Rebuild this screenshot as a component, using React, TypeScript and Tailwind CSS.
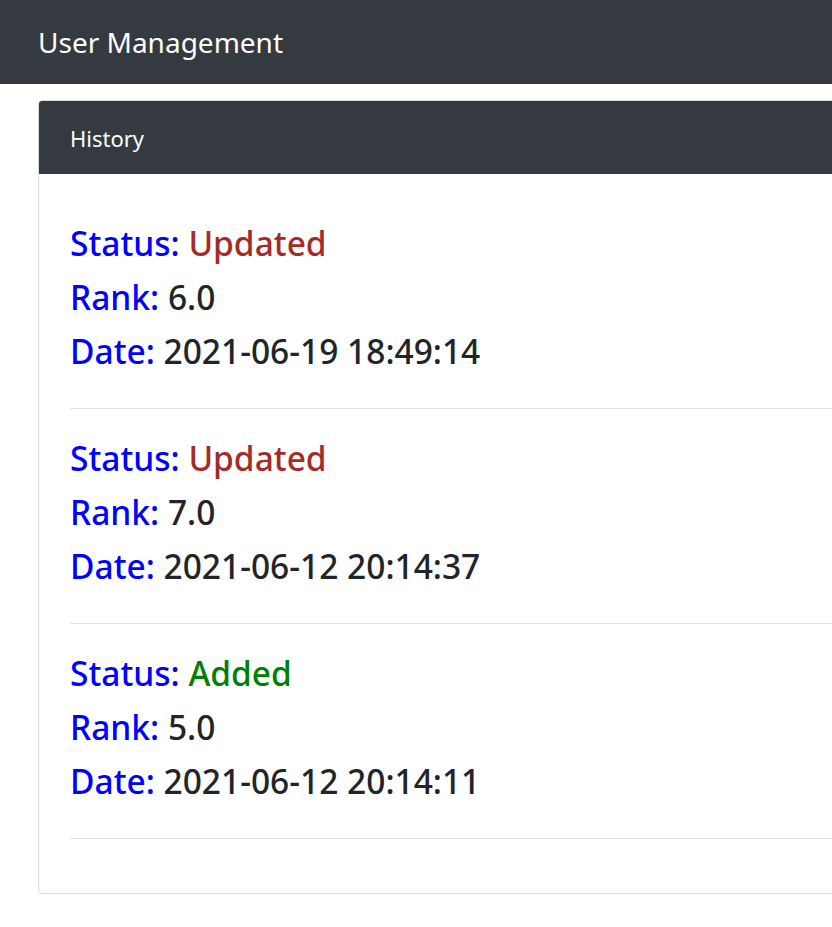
import React from "react";

const entries = [
  { status: "Updated", color: "text-[#a52a2a]", rank: "6.0", date: "2021-06-19 18:49:14" },
  { status: "Updated", color: "text-[#a52a2a]", rank: "7.0", date: "2021-06-12 20:14:37" },
  { status: "Added", color: "text-[#008000]", rank: "5.0", date: "2021-06-12 20:14:11" },
];

export default function App() {
  return (
    <div className="min-h-[927px] w-[832px] overflow-hidden bg-white font-['Noto_Sans',sans-serif]">
      <nav className="flex h-[84px] items-center bg-[#343a40] pl-[38px]">
        <span className="text-[28px] leading-none text-white">User Management</span>
      </nav>
      <div className="pl-[38px] pt-[16px]">
        <div className="w-[860px] rounded-[4px] border border-[#dcdcdc]">
          <div className="flex h-[73px] items-center rounded-t-[3px] bg-[#343a40] pl-[31px]">
            <span className="text-[22px] leading-none text-white">History</span>
          </div>
          <div className="pl-[31px] pt-[42px] pb-[54px]">
            {entries.map((e, i) => (
              <div key={i}>
                <div className="text-[33.5px] font-medium leading-[54px] text-[#212529]">
                  <div>
                    <span className="text-[#0000ff]">Status:</span>{" "}
                    <span className={e.color}>{e.status}</span>
                  </div>
                  <div>
                    <span className="text-[#0000ff]">Rank:</span> {e.rank}
                  </div>
                  <div>
                    <span className="text-[#0000ff]">Date:</span> {e.date}
                  </div>
                </div>
                <hr className={`border-t border-[#e2e2e2] mt-[30px] ${i < 2 ? "mb-[22px]" : ""}`} />
              </div>
            ))}
          </div>
        </div>
      </div>
    </div>
  );
}
